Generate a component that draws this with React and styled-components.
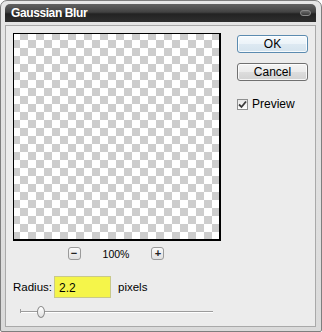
import React from "react";
import styled, { createGlobalStyle } from "styled-components";

const Global = createGlobalStyle`
  html, body { margin: 0; padding: 0; background: #ffffff; }
  body { font-family: "Liberation Sans", Arial, sans-serif; }
  * { box-sizing: border-box; }
`;

const Window = styled.div`
  width: 322px;
  height: 332px;
  border: 1px solid #7e7e7e;
  border-radius: 7px 7px 2px 2px;
  background: linear-gradient(#e6e6e6, #dadada);
  padding: 3px 5px 4px 4px;
  display: flex;
  flex-direction: column;
`;

const TitleBar = styled.div`
  height: 18px;
  border-radius: 5px 5px 0 0;
  background: linear-gradient(#626262 0%, #424242 45%, #232323 55%, #2e2e2e 100%);
  display: flex;
  align-items: center;
  justify-content: space-between;
  padding: 0 5px 0 6px;
`;

const Title = styled.span`
  color: #ffffff;
  font-weight: bold;
  font-size: 12px;
  letter-spacing: -0.4px;
`;

const CloseBtn = styled.span`
  width: 11px;
  height: 6px;
  border-radius: 3px;
  border: 1px solid #8a8a8a;
  background: linear-gradient(#6a6a6a, #3a3a3a);
`;

const Content = styled.div`
  flex: 1;
  margin-top: 3px;
  border: 1px solid #a9a9a9;
  background: #ececec;
  padding: 7px 0 0 7px;
  display: flex;
  flex-direction: column;
`;

const TopArea = styled.div`
  display: flex;
  gap: 16px;
`;

const LeftCol = styled.div`
  display: flex;
  flex-direction: column;
  width: 208px;
`;

const Canvas = styled.div`
  width: 208px;
  height: 208px;
  border: 1px solid #000;
  border-right-width: 2px;
  border-bottom-width: 2px;
  background-color: #ffffff;
  background-image: conic-gradient(#cdcdcd 25%, #ffffff 0 50%, #cdcdcd 0 75%, #ffffff 0);
  background-size: 16px 16px;
  background-position: -2px -2px;
`;

const ZoomRow = styled.div`
  display: flex;
  justify-content: center;
  align-items: center;
  gap: 22px;
  margin-top: 6px;
  padding-right: 2px;
  height: 13px;
`;

const SmallBtn = styled.span`
  width: 13px;
  height: 13px;
  border: 1px solid #9a9a9a;
  border-radius: 3px;
  background: linear-gradient(#fafafa, #e0e0e0);
  display: flex;
  align-items: center;
  justify-content: center;
  font-size: 11px;
  line-height: 1;
  color: #222;
  font-weight: bold;
`;

const ZoomText = styled.span`
  font-size: 10.5px;
  color: #000;
`;

const RightCol = styled.div`
  display: flex;
  flex-direction: column;
  padding-top: 2px;
`;

const Button = styled.div`
  width: 71px;
  height: 18px;
  border: 1px solid ${(p) => (p.$default ? "#5b8bb0" : "#707070")};
  border-radius: 3px;
  background: ${(p) =>
    p.$default
      ? "linear-gradient(#f6fafd 0%, #ebf3f9 50%, #dde9f2 51%, #d4e3ee 100%)"
      : "linear-gradient(#f4f4f4 0%, #ebebeb 50%, #dddddd 51%, #d2d2d2 100%)"};
  box-shadow: inset 0 0 0 1px rgba(255, 255, 255, 0.8);
  display: flex;
  align-items: center;
  justify-content: center;
  font-size: 12px;
  color: #000;
  margin-bottom: 10px;
`;

const CheckRow = styled.label`
  display: flex;
  align-items: center;
  gap: 4px;
  margin-top: 6px;
  font-size: 12px;
  color: #000;
`;

const CheckBox = styled.span`
  width: 11px;
  height: 11px;
  border: 1px solid #8e8f8f;
  background: linear-gradient(#e6e6e6, #ffffff);
  display: flex;
  align-items: center;
  justify-content: center;
`;

const RadiusRow = styled.div`
  display: flex;
  align-items: center;
  margin-top: 16px;
  font-size: 11.5px;
  color: #000;
`;

const Label = styled.span`
  width: 41px;
`;

const Input = styled.div`
  width: 57px;
  height: 22px;
  background: #f5f54a;
  border: 1px solid #c9c98a;
  padding: 4px 0 0 4px;
  font-size: 12px;
  color: #000;
  margin-right: 7px;
`;

const SliderRow = styled.div`
  position: relative;
  margin-top: 8px;
  margin-left: 7px;
  width: 193px;
  height: 12px;
`;

const Track = styled.div`
  position: absolute;
  left: 0;
  right: 0;
  top: 5px;
  height: 2px;
  border-top: 1px solid #9c9c9c;
  border-bottom: 1px solid #ffffff;
  &::before {
    content: "";
    position: absolute;
    left: 0;
    top: -3px;
    width: 1px;
    height: 4px;
    background: #9c9c9c;
  }
`;

const Thumb = styled.div`
  position: absolute;
  left: 17px;
  top: 0;
  width: 8px;
  height: 12px;
  border-radius: 50%;
  border: 1px solid #8a8a8a;
  background: linear-gradient(#ffffff, #e2e2e2);
`;

export default function App() {
  return (
    <>
      <Global />
      <Window>
        <TitleBar>
          <Title>Gaussian Blur</Title>
          <CloseBtn />
        </TitleBar>
        <Content>
          <TopArea>
            <LeftCol>
              <Canvas />
              <ZoomRow>
                <SmallBtn>−</SmallBtn>
                <ZoomText>100%</ZoomText>
                <SmallBtn>+</SmallBtn>
              </ZoomRow>
            </LeftCol>
            <RightCol>
              <Button $default>OK</Button>
              <Button>Cancel</Button>
              <CheckRow>
                <CheckBox>
                  <svg width="9" height="9" viewBox="0 0 9 9">
                    <path d="M1 4.5 L3.5 7 L8 1.5" fill="none" stroke="#3b3b3b" strokeWidth="1.8" />
                  </svg>
                </CheckBox>
                Preview
              </CheckRow>
            </RightCol>
          </TopArea>
          <RadiusRow>
            <Label>Radius:</Label>
            <Input>2.2</Input>
            <span>pixels</span>
          </RadiusRow>
          <SliderRow>
            <Track />
            <Thumb />
          </SliderRow>
        </Content>
      </Window>
    </>
  );
}
